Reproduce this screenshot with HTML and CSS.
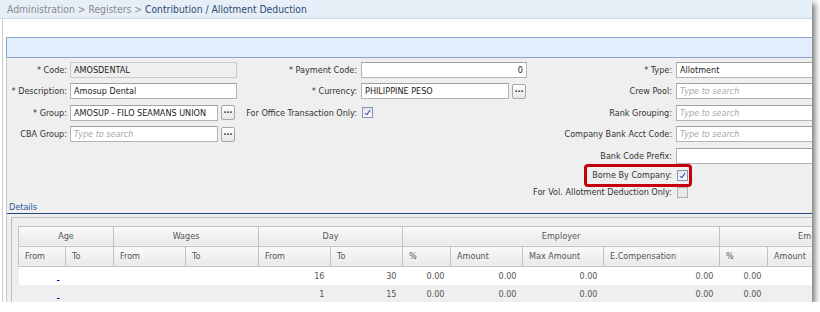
FILE: index.html
```html
<!DOCTYPE html>
<html lang="en">
<head>
    <meta charset="UTF-8">
    <title>Contribution / Allotment Deduction</title>
    <link rel="stylesheet" href="styles.css">
</head>
<body>
<div class="window">
    <div class="crumbs">Administration &gt; Registers &gt; <span class="current">Contribution / Allotment Deduction</span></div>
    <div class="page">
        <div class="toolbar"></div>
        <div class="form">
            <!-- row 1 -->
            <label class="lbl">* Code:</label>
            <div class="fld"><input class="txt disabled" value="AMOSDENTAL" readonly></div>
            <label class="lbl">* Payment Code:</label>
            <div class="fld"><input class="txt num" value="0"></div>
            <label class="lbl">* Type:</label>
            <div class="fld"><input class="txt" value="Allotment"></div>

            <!-- row 2 -->
            <label class="lbl">* Description:</label>
            <div class="fld"><input class="txt" value="Amosup Dental"></div>
            <label class="lbl">* Currency:</label>
            <div class="fld"><input class="txt short" value="PHILIPPINE PESO"><span class="more">&middot;&middot;&middot;</span></div>
            <label class="lbl">Crew Pool:</label>
            <div class="fld"><input class="txt" placeholder="Type to search"></div>

            <!-- row 3 -->
            <label class="lbl">* Group:</label>
            <div class="fld"><input class="txt short" value="AMOSUP - FILO SEAMANS UNION"><span class="more">&middot;&middot;&middot;</span></div>
            <label class="lbl">For Office Transaction Only:</label>
            <div class="fld"><span class="chk checked"></span></div>
            <label class="lbl">Rank Grouping:</label>
            <div class="fld"><input class="txt" placeholder="Type to search"></div>

            <!-- row 4 -->
            <label class="lbl">CBA Group:</label>
            <div class="fld"><input class="txt short" placeholder="Type to search"><span class="more">&middot;&middot;&middot;</span></div>
            <span></span>
            <span></span>
            <label class="lbl">Company Bank Acct Code:</label>
            <div class="fld"><input class="txt" placeholder="Type to search"></div>

            <!-- row 5 -->
            <span></span><span></span><span></span><span></span>
            <label class="lbl">Bank Code Prefix:</label>
            <div class="fld"><input class="txt"></div>

            <!-- row 6 -->
            <span></span><span></span><span></span><span></span>
            <label class="lbl marked">Borne By Company:<span class="mark"></span></label>
            <div class="fld"><span class="chk checked"></span></div>

            <!-- row 7 -->
            <span></span><span></span><span></span><span></span>
            <label class="lbl">For Vol. Allotment Deduction Only:</label>
            <div class="fld"><span class="chk off"></span></div>
        </div>

        <div class="details">
            <div class="section-title">Details</div>
            <div class="grid-panel">
                <table class="grid">
                    <colgroup>
                        <col style="width:47px"><col style="width:48px">
                        <col style="width:72px"><col style="width:73px">
                        <col style="width:72px"><col style="width:72px">
                        <col style="width:48px"><col style="width:72px"><col style="width:81px"><col style="width:116px">
                        <col style="width:48px"><col style="width:72px">
                    </colgroup>
                    <thead>
                        <tr class="group">
                            <th colspan="2">Age</th>
                            <th colspan="2">Wages</th>
                            <th colspan="2">Day</th>
                            <th colspan="4">Employer</th>
                            <th colspan="2" class="clip">Em</th>
                        </tr>
                        <tr class="sub">
                            <th>From</th><th>To</th>
                            <th>From</th><th>To</th>
                            <th>From</th><th>To</th>
                            <th>%</th><th>Amount</th><th>Max Amount</th><th>E.Compensation</th>
                            <th>%</th><th>Amount</th>
                        </tr>
                    </thead>
                    <tbody>
                        <tr>
                            <td><a href="#">&nbsp;</a></td><td></td>
                            <td></td><td></td>
                            <td>16</td><td>30</td>
                            <td>0.00</td><td>0.00</td><td>0.00</td><td>0.00</td>
                            <td>0.00</td><td></td>
                        </tr>
                        <tr class="alt">
                            <td><a href="#">&nbsp;</a></td><td></td>
                            <td></td><td></td>
                            <td>1</td><td>15</td>
                            <td>0.00</td><td>0.00</td><td>0.00</td><td>0.00</td>
                            <td>0.00</td><td></td>
                        </tr>
                    </tbody>
                </table>
            </div>
        </div>
    </div>
</div>
</body>
</html>
```

FILE: styles.css
```css
body {
    margin: 0;
    background: #fff;
    font-family: "DejaVu Sans", Verdana, sans-serif;
    font-stretch: condensed;
}
.window {
    width: 812px;
    height: 302px;
    overflow: hidden;
    background: #fff;
    box-shadow: 3px 3px 6px rgba(0, 0, 0, 0.55);
}
.crumbs {
    height: 18px;
    line-height: 18px;
    padding-left: 7px;
    font-size: 10.3px;
    color: #8a8a8a;
    background: #e6eef8;
    border-bottom: 1px solid #cfd6de;
    white-space: nowrap;
}
.crumbs .current {
    color: #2f4c70;
}
.page {
    margin-left: 2px;
    padding: 18px 0 0 3px;
    border-left: 1px solid #c9c9c9;
    background: #fff;
    height: 300px;
}
.toolbar {
    width: 900px;
    height: 19px;
    background: #e3eefd;
    border: 1px solid #8aa5cf;
    border-right: none;
}
.form {
    display: grid;
    grid-template-columns: 63px 167px 124px 166px 149px 200px;
    grid-template-rows: repeat(5, 21.5px) 17px 17px;
    padding-top: 1px;
    background: #efefef;
    border-left: 1px solid #c6c6c6;
    font-size: 9px;
    color: #333;
}
.lbl {
    text-align: right;
    padding-right: 3px;
    white-space: nowrap;
    align-self: center;
}
.form .lbl:nth-child(6n+3), .form .lbl:nth-child(6n+5) {
    padding-right: 4px;
}
.fld {
    display: flex;
    align-items: center;
    gap: 3px;
}
.txt {
    box-sizing: border-box;
    width: 167px;
    height: 16px;
    margin: 0;
    padding: 0 3px;
    border: 1px solid #b4b4b4;
    border-top-color: #a0a0a0;
    background: #fff;
    font: 9px "DejaVu Sans", Verdana, sans-serif;
    font-stretch: condensed;
    color: #222;
    outline: none;
}
.fld:last-child .txt {
    width: 200px;
}
.txt.short {
    width: 148px;
}
.txt.num {
    width: 166px;
    text-align: right;
}
.txt.disabled {
    background: #efefef;
    border-color: #c9c9c9;
}
.txt::placeholder {
    color: #a9a9a9;
    font-style: italic;
}
.more {
    box-sizing: border-box;
    width: 14px;
    height: 15px;
    border: 1px solid #a6a6a6;
    border-radius: 2px;
    background: linear-gradient(#fff, #e6e6e6);
    font-size: 9px;
    font-weight: bold;
    line-height: 12px;
    text-align: center;
    color: #333;
}
.chk {
    box-sizing: border-box;
    width: 11px;
    height: 11px;
    margin-left: 1px;
    border: 1px solid #8595ab;
    background: linear-gradient(#dfe4ea, #fbfbfb);
    position: relative;
}
.chk.checked::after {
    content: "";
    position: absolute;
    left: 3px;
    top: 1px;
    width: 2px;
    height: 5px;
    border: solid #3553b5;
    border-width: 0 1.5px 1.5px 0;
    transform: rotate(35deg);
}
.chk.off {
    border-color: #b3b3b3;
    background: #e9e9e9;
}
.marked {
    position: relative;
}
.mark {
    position: absolute;
    left: 57px;
    top: -6px;
    width: 102px;
    height: 17px;
    border: 3px solid #c5000b;
    border-radius: 4px;
}
.details {
    background: #efefef;
    border-left: 1px solid #c6c6c6;
    height: 120px;
}
.section-title {
    height: 12px;
    line-height: 12px;
    padding-left: 2px;
    font-size: 9px;
    color: #2a5599;
    border-bottom: 1px solid #27477f;
}
.grid-panel {
    margin: 3px 0 0 4px;
    padding: 8px 0 0 6px;
    border-top: 1px solid #bdbdbd;
    border-left: 1px solid #bdbdbd;
}
.grid {
    border-collapse: collapse;
    table-layout: fixed;
    width: 821px;
    font-size: 9px;
    color: #555;
    white-space: nowrap;
}
.grid th {
    height: 19px;
    padding: 0 6px;
    font-weight: normal;
    text-align: left;
    background: linear-gradient(#fafafa, #e9e9e9);
    border: 1px solid #c2c2c2;
    overflow: hidden;
}
.grid .group th {
    text-align: center;
}
.grid .group th.clip {
    text-align: left;
    padding-left: 78px;
}
.grid td {
    height: 18px;
    padding: 0 6px;
    text-align: right;
    background: #fff;
    overflow: hidden;
}
.grid tr.alt td {
    background: #efefef;
}
.grid a {
    color: #0000cc;
}
```
